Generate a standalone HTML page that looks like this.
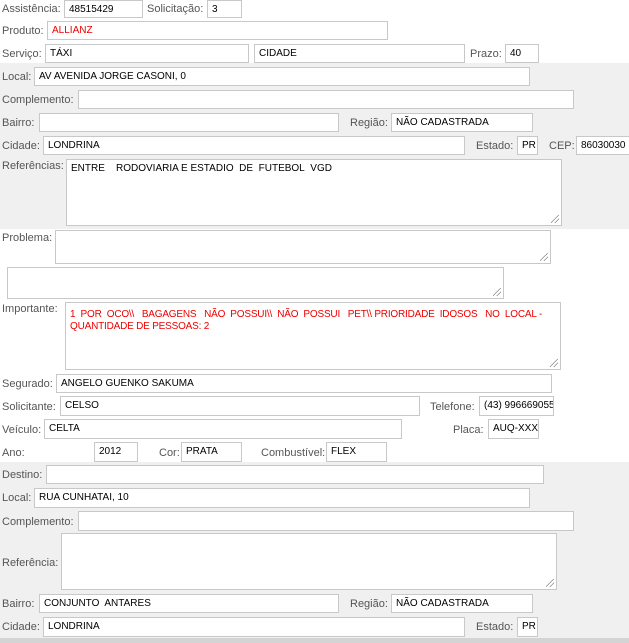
<!DOCTYPE html><html><head><meta charset="utf-8"><style>
*{margin:0;padding:0;box-sizing:border-box}
body{width:629px;height:643px;position:relative;overflow:hidden;background:#fff;font-family:"Liberation Sans","DejaVu Sans",sans-serif}
.g{position:absolute;left:0;width:629px;background:#f0f0f0}
.l{position:absolute;font-size:11px;color:#555;line-height:13px;white-space:nowrap}
.i{position:absolute;background:#fff;border:1px solid #c8c8c8;font-size:10px;color:#000;padding:3px 0 0 4px;white-space:nowrap;overflow:hidden;line-height:12px}
.t{position:absolute;background:#fff;border:1px solid #c8c8c8;font-size:10px;line-height:12px;padding:3px 4px}
.t:after{content:"";position:absolute;right:2px;bottom:2px;width:8px;height:8px;background:linear-gradient(135deg,transparent 45%,#888 45%,#888 52%,transparent 52%,transparent 70%,#888 70%,#888 77%,transparent 77%)}
.r{color:#e00}
</style></head><body>
<div class="g" style="top:63px;height:166px"></div>
<div class="g" style="top:462px;height:176px"></div>
<div class="g" style="top:638px;height:5px;background:#d4d4d4"></div>

<div class="l" style="left:2px;top:3px">Assistência:</div><div class="i" style="left:64px;top:0;width:79px;height:18px">48515429</div>
<div class="l" style="left:147px;top:3px">Solicitação:</div><div class="i" style="left:207px;top:0;width:35px;height:18px">3</div>
<div class="l" style="left:2px;top:25px">Produto:</div><div class="i r" style="left:47px;top:21px;width:341px;height:19px">ALLIANZ</div>
<div class="l" style="left:2px;top:48px">Serviço:</div><div class="i" style="left:45px;top:44px;width:204px;height:19px">TÁXI</div>
<div class="i" style="left:254px;top:44px;width:211px;height:19px">CIDADE</div>
<div class="l" style="left:470px;top:48px">Prazo:</div><div class="i" style="left:505px;top:44px;width:34px;height:19px">40</div>

<div class="l" style="left:2px;top:71px">Local:</div><div class="i" style="left:34px;top:67px;width:496px;height:19px">AV AVENIDA JORGE CASONI, 0</div>
<div class="l" style="left:2px;top:94px">Complemento:</div><div class="i" style="left:78px;top:90px;width:496px;height:19px"></div>
<div class="l" style="left:2px;top:117px">Bairro:</div><div class="i" style="left:39px;top:113px;width:300px;height:19px"></div>
<div class="l" style="left:350px;top:117px">Região:</div><div class="i" style="left:391px;top:113px;width:142px;height:19px">NÃO CADASTRADA</div>
<div class="l" style="left:2px;top:140px">Cidade:</div><div class="i" style="left:43px;top:136px;width:422px;height:19px">LONDRINA</div>
<div class="l" style="left:476px;top:140px">Estado:</div><div class="i" style="left:517px;top:136px;width:21px;height:19px">PR</div>
<div class="l" style="left:549px;top:140px">CEP:</div><div class="i" style="left:576px;top:136px;width:60px;height:19px">86030030</div>
<div class="l" style="left:2px;top:160px">Referências:</div><div class="t" style="left:66px;top:159px;width:496px;height:67px">ENTRE&nbsp;&nbsp;&nbsp; RODOVIARIA E ESTADIO&nbsp; DE&nbsp; FUTEBOL&nbsp; VGD</div>

<div class="l" style="left:2px;top:232px">Problema:</div><div class="t" style="left:55px;top:230px;width:496px;height:34px"></div>
<div class="t" style="left:7px;top:267px;width:497px;height:32px"></div>
<div class="l" style="left:2px;top:303px">Importante:</div><div class="t r" style="left:65px;top:302px;width:496px;height:68px;padding-top:6px;white-space:nowrap;letter-spacing:-0.2px;overflow:hidden">1&nbsp; POR&nbsp; OCO\\&nbsp;&nbsp; BAGAGENS&nbsp;&nbsp; NÃO&nbsp; POSSUI\\&nbsp; NÃO&nbsp; POSSUI&nbsp;&nbsp; PET\\ PRIORIDADE&nbsp; IDOSOS&nbsp;&nbsp; NO&nbsp; LOCAL -<br>QUANTIDADE DE PESSOAS: 2</div>

<div class="l" style="left:2px;top:378px">Segurado:</div><div class="i" style="left:56px;top:374px;width:496px;height:19px">ANGELO GUENKO SAKUMA</div>
<div class="l" style="left:2px;top:401px">Solicitante:</div><div class="i" style="left:60px;top:396px;width:360px;height:20px">CELSO</div>
<div class="l" style="left:430px;top:401px">Telefone:</div><div class="i" style="left:479px;top:396px;width:75px;height:20px">(43) 996669055</div>
<div class="l" style="left:2px;top:424px">Veículo:</div><div class="i" style="left:44px;top:419px;width:358px;height:20px">CELTA</div>
<div class="l" style="left:453px;top:424px">Placa:</div><div class="i" style="left:488px;top:419px;width:51px;height:20px">AUQ-XXXX</div>
<div class="l" style="left:2px;top:447px">Ano:</div><div class="i" style="left:94px;top:442px;width:44px;height:20px">2012</div>
<div class="l" style="left:159px;top:447px">Cor:</div><div class="i" style="left:181px;top:442px;width:61px;height:20px">PRATA</div>
<div class="l" style="left:261px;top:447px">Combustível:</div><div class="i" style="left:326px;top:442px;width:61px;height:20px">FLEX</div>

<div class="l" style="left:2px;top:469px">Destino:</div><div class="i" style="left:46px;top:465px;width:498px;height:19px"></div>
<div class="l" style="left:2px;top:492px">Local:</div><div class="i" style="left:34px;top:488px;width:496px;height:20px">RUA CUNHATAI, 10</div>
<div class="l" style="left:2px;top:516px">Complemento:</div><div class="i" style="left:78px;top:511px;width:496px;height:20px"></div>
<div class="l" style="left:2px;top:557px">Referência:</div><div class="t" style="left:61px;top:533px;width:496px;height:57px"></div>
<div class="l" style="left:2px;top:598px">Bairro:</div><div class="i" style="left:39px;top:594px;width:300px;height:19px">CONJUNTO&nbsp; ANTARES</div>
<div class="l" style="left:350px;top:598px">Região:</div><div class="i" style="left:391px;top:594px;width:142px;height:19px">NÃO CADASTRADA</div>
<div class="l" style="left:2px;top:621px">Cidade:</div><div class="i" style="left:43px;top:617px;width:422px;height:20px">LONDRINA</div>
<div class="l" style="left:476px;top:621px">Estado:</div><div class="i" style="left:517px;top:617px;width:21px;height:20px">PR</div>
</body></html>
